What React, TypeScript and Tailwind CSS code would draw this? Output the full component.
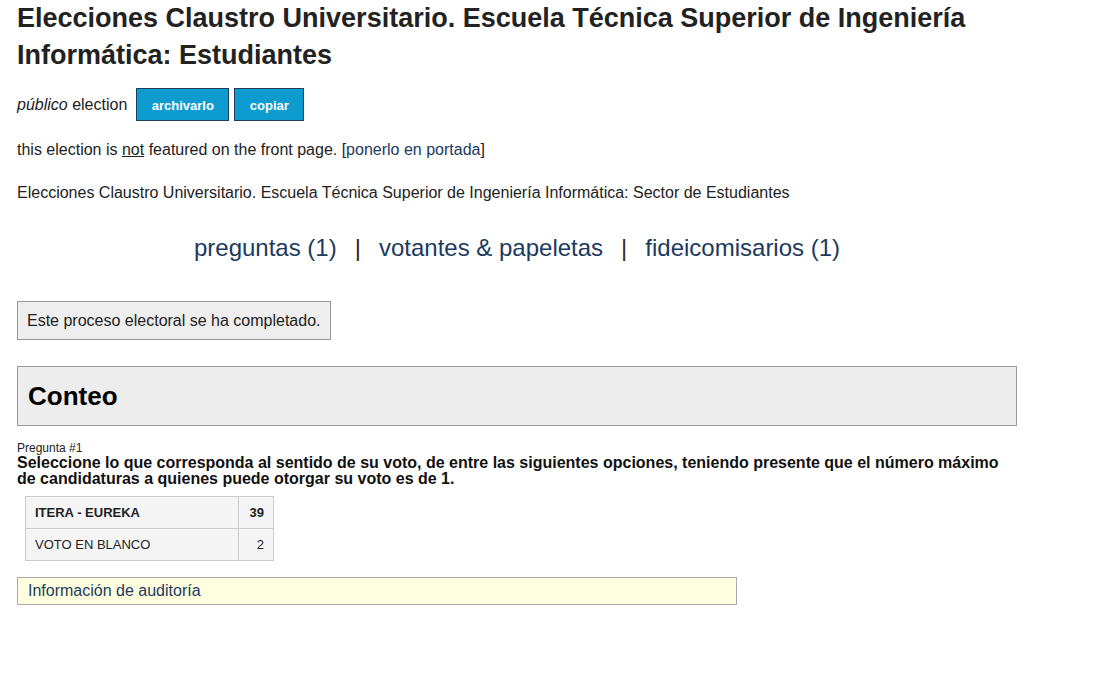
import React from "react";

export default function App() {
  return (
    <div className="min-h-[678px] bg-white px-[17px] text-[#222] [font-family:'Liberation_Sans',Arial,sans-serif]">
      <div className="w-[1000px]">
        <h1 className="m-0 text-[27px] font-bold leading-[37px] text-[#222]">
          Elecciones Claustro Universitario. Escuela Técnica Superior de Ingeniería Informática: Estudiantes
        </h1>
        <div className="mt-[14px] flex items-center text-[16px]">
          <span>
            <em>público</em> election
          </span>
          <button className="ml-[9px] h-[33px] w-[93px] border border-[#1c3f5e] bg-[#0e9bd0] pt-[2px] text-[13px] font-bold text-white">
            archivarlo
          </button>
          <button className="ml-[5px] h-[33px] w-[70px] border border-[#1c3f5e] bg-[#0e9bd0] pt-[2px] text-[13px] font-bold text-white">
            copiar
          </button>
        </div>
        <p className="mt-[20px] text-[16px] leading-[18px]">
          this election is <u>not</u> featured on the front page. [
          <span className="text-[#1c3a5e]">ponerlo en portada</span>]
        </p>
        <p className="mt-[25px] text-[16px] leading-[18px]">
          Elecciones Claustro Universitario. Escuela Técnica Superior de Ingeniería Informática: Sector de Estudiantes
        </p>
        <div className="mt-[32px] text-center text-[24px] leading-[28px] text-[#1c3a5e]">
          <span>preguntas (1)</span>
          <span className="mx-[18px] text-[#3a2a15]">|</span>
          <span>votantes &amp; papeletas</span>
          <span className="mx-[18px] text-[#3a2a15]">|</span>
          <span>fideicomisarios (1)</span>
        </div>
        <div className="mt-[39px] inline-block border border-[#999] bg-[#eee] px-[9px] py-[9px] text-[16px] leading-[19px]">
          Este proceso electoral se ha completado.
        </div>
        <div className="mt-[26px] flex h-[60px] items-center border border-[#999] bg-[#ededed] px-[10px]">
          <h2 className="m-0 text-[26px] font-bold text-black">Conteo</h2>
        </div>
        <div className="mt-[16px] text-[12px] leading-[13px]">Pregunta #1</div>
        <div className="text-[16px] font-bold leading-[16px] text-[#111]">
          Seleccione lo que corresponda al sentido de su voto, de entre las siguientes opciones, teniendo presente que el número máximo de candidaturas a quienes puede otorgar su voto es de 1.
        </div>
        <table className="mt-[9px] ml-[8px] border-collapse text-[13px]">
          <tbody>
            <tr className="h-[32px] bg-[#f5f5f5]">
              <td className="w-[213px] border border-[#ccc] px-[9px] font-bold">ITERA - EUREKA</td>
              <td className="w-[35px] border border-[#ccc] px-[9px] text-right font-bold">39</td>
            </tr>
            <tr className="h-[32px] bg-[#f5f5f5]">
              <td className="border border-[#ccc] px-[9px]">VOTO EN BLANCO</td>
              <td className="border border-[#ccc] px-[9px] text-right">2</td>
            </tr>
          </tbody>
        </table>
        <div className="mt-[16px] w-[720px] border border-[#aaa] bg-[#ffffe0] px-[10px] py-[4px] text-[16px] leading-[18px] text-[#1c3a5e]">
          Información de auditoría
        </div>
      </div>
    </div>
  );
}
